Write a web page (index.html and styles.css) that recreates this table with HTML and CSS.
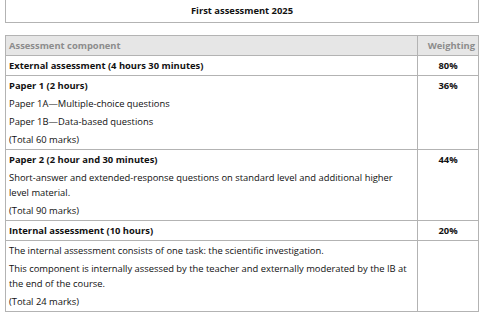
FILE: index.html
```html
<!DOCTYPE html>
<html lang="en">
<head>
    <meta charset="UTF-8">
    <meta name="viewport" content="width=device-width, initial-scale=1.0">
    <title>First assessment 2025</title>
    <link rel="stylesheet" href="styles.css">
</head>
<body>
    <!-- Caption box -->
    <div class="caption">First assessment 2025</div>

    <!-- Assessment table -->
    <table class="assess">
        <colgroup>
            <col class="col-main">
            <col class="col-weight">
        </colgroup>
        <thead>
            <tr>
                <th>Assessment component</th>
                <th class="weight">Weighting</th>
            </tr>
        </thead>
        <tbody>
            <tr class="section">
                <td>External assessment (4 hours 30 minutes)</td>
                <td class="pct">80%</td>
            </tr>
            <tr>
                <td>
                    <p class="head">Paper 1 (2 hours)</p>
                    <p>Paper 1A—Multiple-choice questions</p>
                    <p>Paper 1B—Data-based questions</p>
                    <p>(Total 60 marks)</p>
                </td>
                <td class="pct">36%</td>
            </tr>
            <tr>
                <td>
                    <p class="head">Paper 2 (2 hour and 30 minutes)</p>
                    <p class="wrap">Short-answer and extended-response questions on standard level and additional higher level material.</p>
                    <p>(Total 90 marks)</p>
                </td>
                <td class="pct">44%</td>
            </tr>
            <tr class="section">
                <td>Internal assessment (10 hours)</td>
                <td class="pct">20%</td>
            </tr>
            <tr>
                <td>
                    <p>The internal assessment consists of one task: the scientific investigation.</p>
                    <p class="wrap">This component is internally assessed by the teacher and externally moderated by the IB at the end of the course.</p>
                    <p>(Total 24 marks)</p>
                </td>
                <td></td>
            </tr>
        </tbody>
    </table>
</body>
</html>
```

FILE: styles.css
```css
* {
    margin: 0;
    padding: 0;
    box-sizing: border-box;
}
body {
    font-family: 'Open Sans', sans-serif;
    font-size: 9.4px;
    color: #111;
    background: #fff;
    padding: 0 5px;
}
.caption {
    height: 23px;
    border: 1px solid #b3b3b3;
    border-top: none;
    text-align: center;
    font-weight: 700;
    line-height: 22px;
}
.assess {
    width: 100%;
    margin-top: 12px;
    border-collapse: collapse;
}
.col-weight {
    width: 61px;
}
.assess th,
.assess td {
    border: 1px solid #b3b3b3;
    padding: 2px 3px;
    line-height: 15px;
    text-align: left;
    vertical-align: top;
}
.assess th {
    height: 20px;
    background: #e6e6e6;
    color: #8c8c8c;
    font-weight: 700;
}
.assess th.weight {
    text-align: right;
}
.section td {
    height: 20px;
    font-weight: 700;
}
.assess td.pct {
    text-align: center;
    font-weight: 700;
}
.assess p {
    margin-bottom: 3px;
}
.assess p:last-child {
    margin-bottom: 0;
}
.assess p.head {
    font-weight: 700;
}
.assess p.wrap {
    max-width: 402px;
}
```
